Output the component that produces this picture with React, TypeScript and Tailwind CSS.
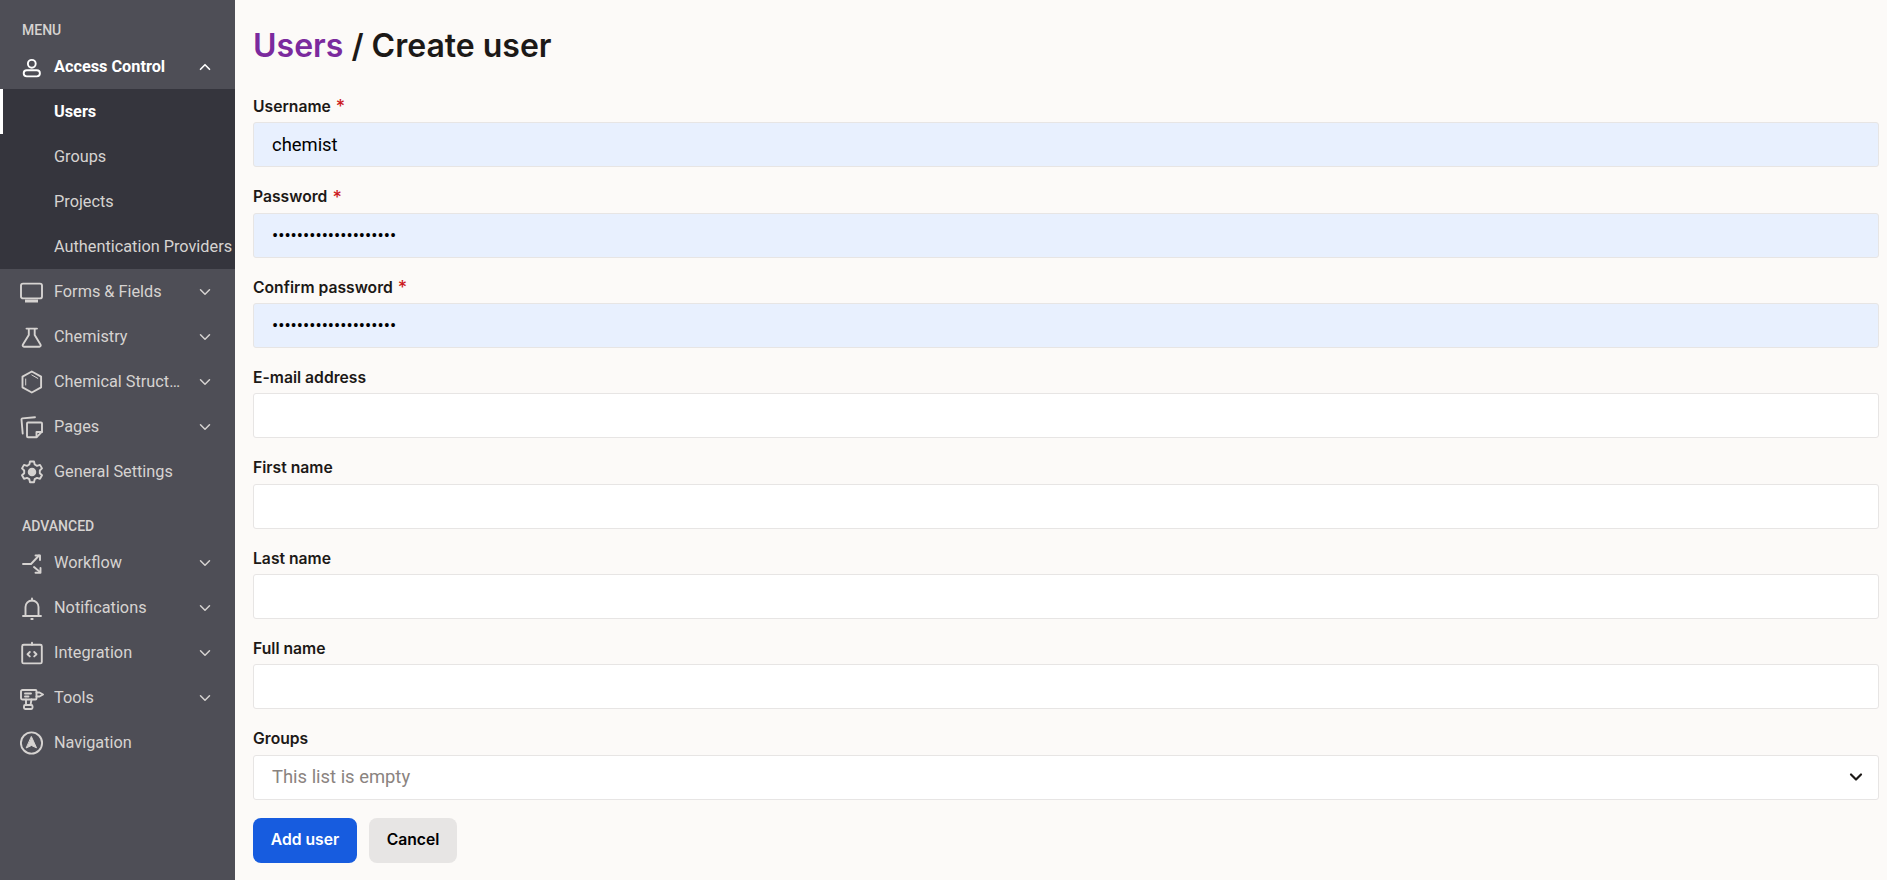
import React from 'react';
import { ChevronDown, ChevronUp } from 'lucide-react';

const Svg: React.FC<{ children: React.ReactNode }> = ({ children }) => (
  <svg
    viewBox="0 0 24 24"
    fill="none"
    stroke="currentColor"
    strokeWidth={1.9}
    strokeLinecap="round"
    strokeLinejoin="round"
    className="h-6 w-6 shrink-0"
  >
    {children}
  </svg>
);

const PersonIcon = () => (
  <Svg>
    <circle cx="11.800" cy="8.800" r="3.900" />
    <rect x="3.700" y="15.200" width="16.200" height="6.200" rx="3.100" />
  </Svg>
);
const MonitorIcon = () => (
  <Svg>
    <rect x="1" y="3.600" width="21" height="14.800" rx="2" />
    <path d="M5 21h13" strokeWidth={3} strokeLinecap="butt" />
  </Svg>
);
const FlaskIcon = () => (
  <Svg>
    <path d="M6.500 3.600h10.500M8.800 3.600v6.500L2.800 19.800a1.400 1.400 0 0 0 1.200 2h15.400a1.400 1.400 0 0 0 1.200-2L14.700 10.100V3.600" />
  </Svg>
);
const HexagonIcon = () => (
  <Svg>
    <path d="M11.800 1.500l9.300 5.200v10.600l-9.300 5.200-9.300-5.200V6.700z" />
    <path d="M11.800 5l6 3.400M5.700 9v6" strokeWidth={1} />
  </Svg>
);
const PagesIcon = () => (
  <Svg>
    <path d="M15 2.200 2.400 3.400a1 1 0 0 0-.9 1.100l1.200 14" />
    <path d="M8 7.500h13a1 1 0 0 1 1 1v8.200l-5.300 5.500H8a1 1 0 0 1-1-1V8.500a1 1 0 0 1 1-1z" />
    <path d="M22 17h-5.500v5" />
  </Svg>
);
const GearIcon = () => (
  <Svg>
    <path d="M10 1.500h4l.7 3 2.300 1.300 3-.9 2 3.500-2.200 2.100v2.700l2.200 2.100-2 3.500-3-.9-2.300 1.300-.7 3h-4l-.7-3L7 17.900l-3 .9-2-3.500 2.200-2.100v-2.700L2 8.400l2-3.500 3 .9 2.300-1.300z" />
    <circle cx="12" cy="12" r="3.300" fill="currentColor" />
  </Svg>
);
const WorkflowIcon = () => (
  <Svg>
    <path d="M3 13h8l8-8.500" />
    <path d="M15.500 4.500h4.500V9" />
    <path d="M14 16l6 5" />
    <path d="M20.500 17v4.800h-5" />
  </Svg>
);
const BellIcon = () => (
  <Svg>
    <path d="M5.500 19.500V11a6.500 6.500 0 0 1 13 0v8.500" />
    <path d="M3 20h18M12 2.500v2M11.300 23h1.400" />
  </Svg>
);
const IntegrationIcon = () => (
  <Svg>
    <rect x="2.200" y="3.800" width="19.600" height="18.600" rx="1.500" />
    <path d="M12 1.800v2M9.800 11l-2.300 2.200 2.300 2.200M14.200 11l2.300 2.200-2.300 2.200" />
  </Svg>
);
const DrillIcon = () => (
  <Svg>
    <path d="M2.500 4h13a1 1 0 0 1 1 1v7.500a1 1 0 0 1-1 1h-13A1.500 1.500 0 0 1 1 12V5.500A1.500 1.500 0 0 1 2.500 4z" />
    <path d="M16.500 6.500h3l3.500 2-3.500 2h-3" />
    <path d="M5 7.500h6M5 10.500h3.500" />
    <path d="M6 13.500V19M11.500 13.500 10.500 19" />
    <rect x="4" y="19" width="8.500" height="4" rx="1.200" />
  </Svg>
);
const NavigationIcon = () => (
  <Svg>
    <circle cx="11.500" cy="12" r="10.600" />
    <path d="M11.500 5.800l5 11-5-2.300-5 2.300z" fill="currentColor" strokeWidth={1} />
  </Svg>
);

const NavRow: React.FC<{ icon: React.ReactNode; label: string; chevron?: boolean }> = ({ icon, label, chevron = true }) => (
  <div className="flex h-[45px] items-center gap-[10px] pl-5 pr-[21px] text-[#d6d3d1]">
    {icon}
    <span className="min-w-0 flex-1 truncate pt-[2px] text-[16.300px]">{label}</span>
    {chevron && <ChevronDown className="h-[18px] w-[18px] shrink-0" strokeWidth={2} />}
  </div>
);

const SubItem: React.FC<{ label: string; active?: boolean }> = ({ label, active }) => (
  <div
    className={
      active
        ? 'flex h-[45px] items-center border-l-[3px] border-white pl-[51px] pt-[2px] text-[16.300px] font-bold text-white'
        : 'flex h-[45px] items-center whitespace-nowrap pl-[54px] pt-[2px] text-[16.300px] text-[#d6d3d1]'
    }
  >
    {label}
  </div>
);

const Sidebar = () => (
  <aside className="h-full w-[235px] shrink-0 overflow-hidden bg-[#4e4e56] font-['Roboto',sans-serif]">
    <div className="flex h-[44px] items-end pb-[4px] pl-[22px] text-[14px] font-medium uppercase leading-[20px] text-[#d6d3d1]">Menu</div>
    <div className="flex h-[45px] items-center gap-[10px] pl-5 pr-[21px] text-white">
      <PersonIcon />
      <span className="flex-1 pt-[2px] text-[16.300px] font-bold">Access Control</span>
      <ChevronUp className="h-[18px] w-[18px]" strokeWidth={2.200} />
    </div>
    <div className="bg-[#35353d]">
      <SubItem label="Users" active />
      <SubItem label="Groups" />
      <SubItem label="Projects" />
      <SubItem label="Authentication Providers" />
    </div>
    <NavRow icon={<MonitorIcon />} label="Forms & Fields" />
    <NavRow icon={<FlaskIcon />} label="Chemistry" />
    <NavRow icon={<HexagonIcon />} label="Chemical Structures" />
    <NavRow icon={<PagesIcon />} label="Pages" />
    <NavRow icon={<GearIcon />} label="General Settings" chevron={false} />
    <div className="flex h-[46px] items-end pb-[4px] pl-[22px] text-[14px] font-medium uppercase leading-[20px] text-[#d6d3d1]">Advanced</div>
    <NavRow icon={<WorkflowIcon />} label="Workflow" />
    <NavRow icon={<BellIcon />} label="Notifications" />
    <NavRow icon={<IntegrationIcon />} label="Integration" />
    <NavRow icon={<DrillIcon />} label="Tools" />
    <NavRow icon={<NavigationIcon />} label="Navigation" chevron={false} />
  </aside>
);

const inputBase =
  "block h-[45px] w-full rounded-[3px] border border-[#e7e5e4] px-[18px] font-['Roboto',sans-serif] text-[18.400px] text-black outline-none";

const Field: React.FC<{ label: string; required?: boolean; value?: string; type?: string; filled?: boolean }> = ({
  label,
  required,
  value = '',
  type = 'text',
  filled,
}) => (
  <div className="flex flex-col">
    <label className="flex h-[21px] items-center gap-[5px] pt-[2px] text-[15.700px] font-semibold text-[#1c1917]">
      {label}
      {required && <span className="text-[18px] font-medium text-[#cc1a1f]">*</span>}
    </label>
    <input
      readOnly
      type={type}
      value={value}
      className={`${inputBase} mt-[6px] ${filled ? 'bg-[#e8f0fe]' : 'bg-white'}`}
    />
  </div>
);

export default function App() {
  return (
    <div className="flex h-[880px] w-full overflow-hidden bg-[#fcfaf8] font-['Inter',sans-serif]">
      <Sidebar />
      <main className="min-w-0 flex-1 pl-[18px] pr-2">
        <h1 className="pt-[27px] text-[32px] font-semibold leading-[38px] text-[#1c1917]">
          <span className="text-[#7b2a9e]">Users</span> / Create user
        </h1>
        <form className="mt-[30.300px] flex flex-col gap-[18.350px]">
          <Field label="Username" required value="chemist" filled />
          <Field label="Password" required type="password" value="********************" filled />
          <Field label="Confirm password" required type="password" value="********************" filled />
          <Field label="E-mail address" />
          <Field label="First name" />
          <Field label="Last name" />
          <Field label="Full name" />
          <div className="flex flex-col">
            <label className="flex h-[21px] items-center pt-[2px] text-[15.700px] font-semibold text-[#1c1917]">Groups</label>
            <div className={`${inputBase} mt-[6px] flex items-center justify-between bg-white pr-[12px]`}>
              <span className="text-[#8a8380]">This list is empty</span>
              <ChevronDown className="h-5 w-5 text-[#1c1917]" strokeWidth={2.600} />
            </div>
          </div>
        </form>
        <div className="mt-[18px] flex gap-3">
          <button className="h-[45px] w-[104px] rounded-lg bg-[#175cdf] text-[15.700px] font-semibold text-white">Add user</button>
          <button className="h-[45px] w-[88px] rounded-lg bg-[#e7e5e4] text-[15.700px] font-semibold text-black">Cancel</button>
        </div>
      </main>
    </div>
  );
}
